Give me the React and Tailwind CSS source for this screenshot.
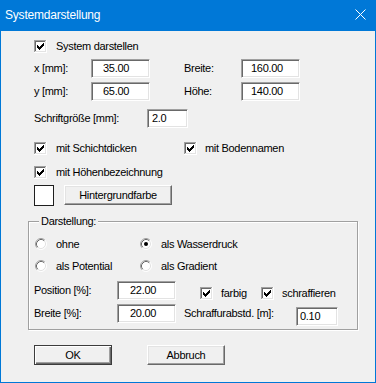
import React from "react";

const CHECK_PIXELS = [
  [9, 3], [8, 4], [9, 4], [3, 5], [7, 5], [8, 5], [9, 5], [3, 6], [4, 6], [6, 6], [7, 6], [8, 6],
  [3, 7], [4, 7], [5, 7], [6, 7], [7, 7], [4, 8], [5, 8], [6, 8], [5, 9],
];

function CheckBox() {
  return (
    <svg width="13" height="13" viewBox="0 0 13 13" className="shrink-0 block" shapeRendering="crispEdges">
      <rect x="0" y="0" width="13" height="13" fill="#ffffff" />
      <rect x="0" y="0" width="12" height="1" fill="#a0a0a0" />
      <rect x="0" y="0" width="1" height="12" fill="#a0a0a0" />
      <rect x="1" y="1" width="10" height="1" fill="#696969" />
      <rect x="1" y="1" width="1" height="10" fill="#696969" />
      <rect x="1" y="11" width="11" height="1" fill="#e3e3e3" />
      <rect x="11" y="1" width="1" height="11" fill="#e3e3e3" />
      {CHECK_PIXELS.map(([x, y]) => (
        <rect key={x + "-" + y} x={x} y={y} width="1" height="1" fill="#000" />
      ))}
    </svg>
  );
}

function Radio({ checked }) {
  return (
    <svg width="12" height="12" viewBox="0 0 12 12" className="shrink-0 block">
      <circle cx="6" cy="6" r="5" fill="#ffffff" />
      <path d="M2.11 9.89 A5.5 5.5 0 0 1 9.89 2.11" fill="none" stroke="#a0a0a0" strokeWidth="1" />
      <path d="M9.89 2.11 A5.5 5.5 0 0 1 2.11 9.89" fill="none" stroke="#ffffff" strokeWidth="1" />
      <path d="M2.82 9.18 A4.5 4.5 0 0 1 9.18 2.82" fill="none" stroke="#696969" strokeWidth="1" />
      <path d="M9.18 2.82 A4.5 4.5 0 0 1 2.82 9.18" fill="none" stroke="#e3e3e3" strokeWidth="1" />
      {checked && <circle cx="6" cy="6" r="2" fill="#000" />}
    </svg>
  );
}

function Field({ value, className }) {
  return (
    <div
      className={
        "h-[19px] bg-white border border-t-[#a0a0a0] border-l-[#a0a0a0] border-b-white border-r-white shadow-[inset_1px_1px_0_#696969,inset_-1px_-1px_0_#e3e3e3] flex items-center leading-none " +
        className
      }
    >
      {value}
    </div>
  );
}

function Button({ children, className, isDefault }) {
  return (
    <div
      className={
        "h-[20px] bg-[#f0f0f0] flex items-center justify-center leading-none " +
        (isDefault
          ? "border border-[#3c3c3c] shadow-[inset_1px_1px_0_#fff,inset_-1px_-1px_0_#696969,inset_-2px_-2px_0_#a0a0a0] "
          : "border border-t-white border-l-white border-b-[#696969] border-r-[#696969] shadow-[inset_-1px_-1px_0_#a0a0a0,inset_1px_1px_0_#e3e3e3] ") +
        className
      }
    >
      {children}
    </div>
  );
}

export default function App() {
  return (
    <div className="w-[376px] h-[383px] bg-[#f0f0f0] border border-[#0078d7] flex flex-col font-['Liberation_Sans',Arial,sans-serif] text-[11px] text-black tracking-[-0.3px] overflow-hidden">
      {/* Title bar */}
      <div className="h-[30px] shrink-0 bg-[#0078d7] flex items-center justify-between pl-[4px] pr-[9px] pb-[3px]">
        <span className="text-white text-[12px] tracking-[-0.2px] leading-none">Systemdarstellung</span>
        <svg width="11" height="11" viewBox="0 0 11 11" className="block">
          <path d="M0.5 0.5 L10.5 10.5 M10.5 0.5 L0.5 10.5" stroke="#ffffff" strokeWidth="1" fill="none" />
        </svg>
      </div>

      {/* Row: System darstellen */}
      <div className="mt-[9px] ml-[33px] h-[13px] flex items-center">
        <CheckBox />
        <span className="ml-[9px] leading-none">System darstellen</span>
      </div>

      {/* Row: x / Breite */}
      <div className="mt-[6px] ml-[33px] h-[19px] flex items-center">
        <span className="w-[57px] leading-none">x [mm]:</span>
        <Field value="35.00" className="w-[59px] pl-[11px]" />
        <span className="ml-[34px] w-[57px] leading-none">Breite:</span>
        <Field value="160.00" className="w-[59px] pl-[9px]" />
      </div>

      {/* Row: y / Höhe */}
      <div className="mt-[4px] ml-[33px] h-[19px] flex items-center">
        <span className="w-[57px] leading-none">y [mm]:</span>
        <Field value="65.00" className="w-[59px] pl-[11px]" />
        <span className="ml-[34px] w-[57px] leading-none">Höhe:</span>
        <Field value="140.00" className="w-[59px] pl-[9px]" />
      </div>

      {/* Row: Schriftgröße */}
      <div className="mt-[8px] ml-[33px] h-[19px] flex items-center">
        <span className="w-[113px] leading-none">Schriftgröße [mm]:</span>
        <Field value="2.0" className="w-[41px] pl-[4px]" />
      </div>

      {/* Row: checkboxes */}
      <div className="mt-[14px] ml-[33px] h-[13px] flex items-center">
        <div className="w-[150px] flex items-center">
          <CheckBox />
          <span className="ml-[9px] leading-none">mit Schichtdicken</span>
        </div>
        <CheckBox />
        <span className="ml-[8px] leading-none">mit Bodennamen</span>
      </div>

      <div className="mt-[11px] ml-[33px] h-[13px] flex items-center">
        <CheckBox />
        <span className="ml-[9px] leading-none">mit Höhenbezeichnung</span>
      </div>

      {/* Row: colour + button */}
      <div className="mt-[6px] ml-[33px] h-[20px] flex items-center gap-[10px]">
        <div className="w-[20px] h-[21px] bg-white border border-[#1e1e1e]" />
        <Button className="w-[108px]">Hintergrundfarbe</Button>
      </div>

      {/* Group box */}
      <div className="relative mt-[16px] ml-[27px] w-[330px] h-[109px] shrink-0 border border-[#a0a0a0] shadow-[inset_1px_1px_0_#fff,1px_1px_0_#fff] flex flex-col">
        <span className="absolute left-[10px] top-[-7px] px-[2px] bg-[#f0f0f0] leading-[13px]">Darstellung:</span>

        <div className="mt-[16px] ml-[6px] h-[12px] flex items-center">
          <div className="w-[105px] flex items-center">
            <Radio />
            <span className="ml-[9px] leading-none">ohne</span>
          </div>
          <Radio checked />
          <span className="ml-[9px] leading-none">als Wasserdruck</span>
        </div>

        <div className="mt-[10px] ml-[6px] h-[12px] flex items-center">
          <div className="w-[105px] flex items-center">
            <Radio />
            <span className="ml-[9px] leading-none">als Potential</span>
          </div>
          <Radio />
          <span className="ml-[9px] leading-none">als Gradient</span>
        </div>

        <div className="mt-[9px] ml-[5px] h-[19px] flex items-start">
          <span className="w-[83px] h-[19px] flex items-center leading-none">Position [%]:</span>
          <Field value="22.00" className="w-[59px] pl-[12px]" />
          <div className="ml-[24px] mt-[6px] flex items-center">
            <div className="w-[61px] flex items-center">
              <CheckBox />
              <span className="ml-[8px] leading-none">farbig</span>
            </div>
            <CheckBox />
            <span className="ml-[8px] leading-none">schraffieren</span>
          </div>
        </div>

        <div className="mt-[4px] ml-[5px] flex items-start">
          <span className="w-[83px] h-[19px] flex items-center leading-none">Breite [%]:</span>
          <Field value="20.00" className="w-[59px] pl-[12px]" />
          <span className="ml-[8px] w-[112px] h-[19px] flex items-center leading-none">Schraffurabstd. [m]:</span>
          <Field value="0.10" className="mt-[3px] w-[42px] pl-[3px]" />
        </div>
      </div>

      {/* Buttons */}
      <div className="mt-[15px] ml-[33px] h-[20px] flex items-center">
        <Button isDefault className="w-[78px]">OK</Button>
        <Button className="ml-[35px] w-[78px]">Abbruch</Button>
      </div>
    </div>
  );
}
